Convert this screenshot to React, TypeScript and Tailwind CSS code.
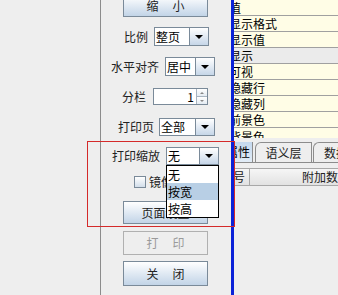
import React from "react";

const font = { fontFamily: '"Noto Sans CJK SC", "Noto Sans", sans-serif' };

function Arrow() {
  return (
    <div className="w-[19px] h-full border-l border-[#7a8a99] bg-linear-to-b from-white to-[#c6d6e8] flex items-center justify-center">
      <div className="w-0 h-0 border-l-[4px] border-r-[4px] border-t-[4px] border-l-transparent border-r-transparent border-t-black" />
    </div>
  );
}

function Combo({ text, w, h }: { text: string; w: string; h: string }) {
  return (
    <div className={`flex border border-[#7a8a99] bg-white ${w} ${h}`}>
      <div className="flex-1 flex items-center pl-px text-[12px] text-black leading-none">{text}</div>
      <Arrow />
    </div>
  );
}

function Label({ text, w }: { text: string; w: string }) {
  return <div className={`${w} text-[12px] text-[#222] leading-none`}>{text}</div>;
}

function Btn({ children, disabled, h }: { children: React.ReactNode; disabled?: boolean; h: string }) {
  return (
    <div
      className={`ml-[22px] w-[85px] ${h} flex items-center justify-center gap-[14px] text-[12px] leading-none border ${
        disabled
          ? "border-[#b0b0b0] bg-[#eeeeee] text-[#9a9a9a]"
          : "border-[#7a8a99] bg-linear-to-b from-white to-[#c2d4e7] text-[#222]"
      }`}
    >
      {children}
    </div>
  );
}

const rows = ["值", "显示格式", "显示值", "显示", "可视", "隐藏行", "隐藏列", "前景色"];

export default function App() {
  return (
    <div className="relative w-[338px] h-[295px] overflow-hidden bg-[#eeeeee] flex" style={font}>
      <div className="w-[100px] shrink-0" />
      <div className="w-px shrink-0 bg-[#8c8c8c]" />

      {/* options column */}
      <div className="w-[130px] shrink-0 flex flex-col">
        <div className="-mt-[5px]">
          <Btn h="h-[22px]">
            <span>缩</span>
            <span>小</span>
          </Btn>
        </div>

        <div className="mt-[10px] h-[19px] flex items-center pl-[23px] gap-[6px]">
          <Label text="比例" w="w-[24px]" />
          <Combo text="整页" w="w-[55px]" h="h-[19px]" />
        </div>

        <div className="mt-[11px] h-[19px] flex items-center pl-[10px] gap-[6px]">
          <Label text="水平对齐" w="w-[48px]" />
          <Combo text="居中" w="w-[50px]" h="h-[19px]" />
        </div>

        <div className="mt-[12px] h-[17px] flex items-center pl-[21px] gap-[7px]">
          <Label text="分栏" w="w-[24px]" />
          <div className="w-[55px] h-[17px] flex border border-[#7a8a99] bg-white">
            <div className="flex-1 flex items-center justify-end pr-[2px] text-[12px] leading-none text-black">1</div>
            <div className="w-[11px] flex flex-col border-l border-[#a8b4c0]">
              <div className="flex-1 flex items-center justify-center border-b border-[#a8b4c0] bg-linear-to-b from-white to-[#e4ebf2]">
                <div className="w-0 h-0 border-l-[2px] border-r-[2px] border-b-[2px] border-l-transparent border-r-transparent border-b-[#888]" />
              </div>
              <div className="flex-1 flex items-center justify-center bg-linear-to-b from-white to-[#e4ebf2]">
                <div className="w-0 h-0 border-l-[2px] border-r-[2px] border-t-[2px] border-l-transparent border-r-transparent border-t-[#888]" />
              </div>
            </div>
          </div>
        </div>

        <div className="mt-[13px] h-[18px] flex items-center pl-[17px] gap-[5px]">
          <Label text="打印页" w="w-[36px]" />
          <Combo text="全部" w="w-[56px]" h="h-[18px]" />
        </div>

        <div className="mt-[11px] h-[18px] flex items-center pl-[11px] gap-[6px]">
          <Label text="打印缩放" w="w-[48px]" />
          <Combo text="无" w="w-[53px]" h="h-[18px]" />
        </div>

        <div className="mt-[11px] h-[12px] flex items-center pl-[33px] gap-[3px]">
          <div className="w-[12px] h-[12px] border border-[#7a8a99] bg-linear-to-b from-white to-[#d2deea]" />
          <div className="text-[12px] leading-none text-[#222]">镜像</div>
        </div>

        <div className="mt-[13px]">
          <Btn h="h-[23px]">
            <span>页面设置</span>
          </Btn>
        </div>
        <div className="mt-[7px]">
          <Btn h="h-[24px]" disabled>
            <span>打</span>
            <span>印</span>
          </Btn>
        </div>
        <div className="mt-[6px]">
          <Btn h="h-[25px]">
            <span>关</span>
            <span>闭</span>
          </Btn>
        </div>
      </div>

      <div className="w-[3px] shrink-0 bg-[#0a22d8]" />

      {/* property table + tabs */}
      <div className="flex-1 flex flex-col overflow-hidden">
        <div className="flex flex-col">
          {rows.map((r, i) => (
            <div
              key={r}
              className={`h-[16px] shrink-0 flex items-center border-b border-[#a0a0a0] overflow-hidden text-[12px] leading-none text-black ${
                i === 3 ? "bg-[#ebebeb]" : "bg-[#fffde6]"
              }`}
            >
              <span className="-ml-[5px] whitespace-nowrap">{r}</span>
            </div>
          ))}
          <div className="h-[10px] shrink-0 overflow-hidden bg-[#fffde6] text-[12px] leading-none text-black">
            <span className="block -ml-[5px] mt-[3px] whitespace-nowrap">背景色</span>
          </div>
        </div>

        <div className="mt-[5px] h-[20px] flex items-end border-b border-[#8c8c8c]">
          <div className="w-[19px] h-[20px] flex items-center overflow-hidden bg-linear-to-b from-[#c4d8ee] to-[#e2ecf6] border-r border-[#8c8c8c] text-[12px] leading-none">
            <span className="-ml-[8px] whitespace-nowrap">属性</span>
          </div>
          <div className="ml-[2px] w-[57px] h-[20px] flex items-center justify-center border-t border-r border-l border-[#8c8c8c] rounded-tl-[6px] text-[12px] leading-none text-[#222]">
            语义层
          </div>
          <div className="ml-px flex-1 h-[20px] flex items-center pl-[10px] border-t border-l border-[#8c8c8c] rounded-tl-[6px] overflow-hidden text-[12px] leading-none text-[#222] whitespace-nowrap">
            数据源
          </div>
        </div>

        <div className="mt-[5px] h-[18px] flex border-y border-[#a8a8a8] bg-linear-to-b from-[#f6f6f6] to-[#e2e2e2] text-[12px] leading-none text-[#222]">
          <div className="w-[16px] flex items-center overflow-hidden border-r border-[#a8a8a8]">
            <span className="-ml-[13px] whitespace-nowrap">序号</span>
          </div>
          <div className="flex-1 flex items-center justify-end overflow-hidden">
            <span className="-mr-[12px] whitespace-nowrap">附加数据</span>
          </div>
        </div>
      </div>

      {/* dropdown popup */}
      <div className="absolute left-[166px] top-[165px] w-[53px] h-[53px] border border-black bg-white flex flex-col text-[12px] leading-none text-black">
        <div className="h-[17px] flex items-center pl-px">无</div>
        <div className="h-[17px] flex items-center pl-px bg-[#b8cfe5]">按宽</div>
        <div className="h-[17px] flex items-center pl-px">按高</div>
      </div>

      {/* red annotation box */}
      <div className="absolute left-[87px] top-[141px] w-[148px] h-[86px] border border-[#d42a2a]" />
    </div>
  );
}
